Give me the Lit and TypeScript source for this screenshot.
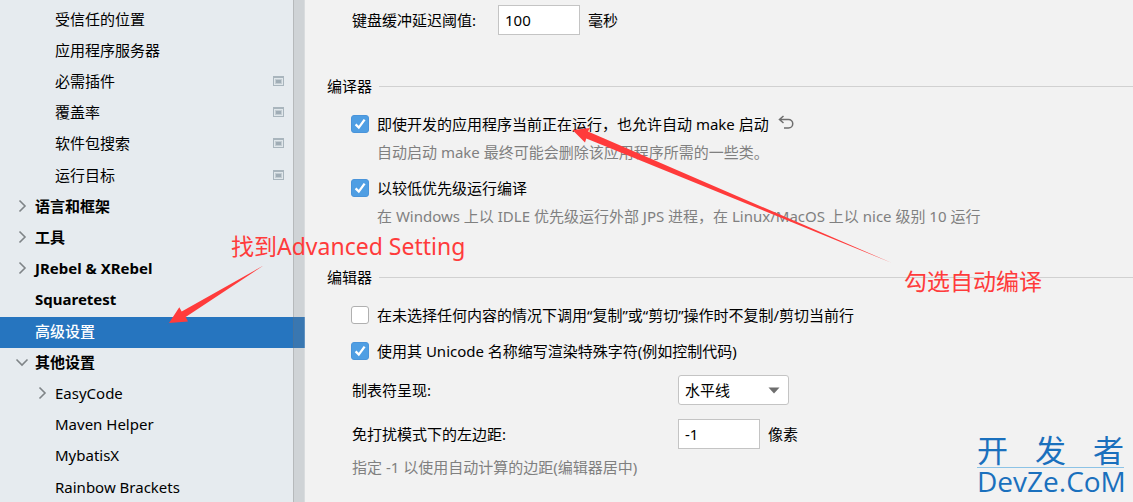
import { LitElement, html, svg, css, nothing } from "lit";
import { customElement, property } from "lit/decorators.js";

type Arrow = "right" | "down";

interface TreeItem {
  label: string;
  level: 1 | 2;
  bold?: boolean;
  arrow?: Arrow;
  project?: boolean;
  selected?: boolean;
}

const ITEMS: TreeItem[] = [
  { label: "受信任的位置", level: 2 },
  { label: "应用程序服务器", level: 2 },
  { label: "必需插件", level: 2, project: true },
  { label: "覆盖率", level: 2, project: true },
  { label: "软件包搜索", level: 2, project: true },
  { label: "运行目标", level: 2, project: true },
  { label: "语言和框架", level: 1, bold: true, arrow: "right" },
  { label: "工具", level: 1, bold: true, arrow: "right" },
  { label: "JRebel & XRebel", level: 1, bold: true, arrow: "right" },
  { label: "Squaretest", level: 1, bold: true },
  { label: "高级设置", level: 1, bold: true, selected: true },
  { label: "其他设置", level: 1, bold: true, arrow: "down" },
  { label: "EasyCode", level: 2, arrow: "right" },
  { label: "Maven Helper", level: 2 },
  { label: "MybatisX", level: 2 },
  { label: "Rainbow Brackets", level: 2 },
];

@customElement("settings-tree")
export class SettingsTree extends LitElement {
  static styles = css`
    :host {
      display: block;
      position: relative;
      overflow: hidden;
      background: #e6ebef;
    }
    .list {
      margin: 0;
      padding: 5px 0 0;
      list-style: none;
    }
    .item {
      display: flex;
      height: 31px;
    }
    .item:nth-child(5n) {
      height: 32px;
    }
    .link {
      flex: 1;
      display: flex;
      align-items: center;
      padding: 0 21px 4px 15px;
      color: #000;
      text-decoration: none;
      white-space: nowrap;
    }
    .level2 {
      padding-left: 35px;
    }
    .bold {
      font-weight: 700;
    }
    .selected {
      background: #2675bf;
      color: #fff;
      font-weight: 500;
    }
    .arrow {
      width: 14px;
      height: 14px;
      margin-right: 6px;
      fill: none;
      stroke: #7f8487;
      stroke-width: 1.6;
    }
    .label {
      flex: 1;
    }
    .project {
      width: 11px;
      height: 10px;
    }
    .scrollbar {
      position: absolute;
      top: 0;
      right: 0;
      bottom: 0;
      width: 12px;
      box-sizing: border-box;
      background: rgba(127, 127, 127, 0.22);
      border-left: 1px solid rgba(110, 110, 110, 0.25);
      border-right: 1px solid rgba(255, 255, 255, 0.2);
    }
  `;

  private arrow(kind?: Arrow) {
    const d = kind === "down" ? "M1.5 4.5 L7 10 L12.5 4.5" : "M4.5 1.5 L10 7 L4.5 12.5";
    return html`<svg class="arrow" viewBox="0 0 14 14" aria-hidden="true">
      ${kind ? svg`<path d=${d} />` : nothing}
    </svg>`;
  }

  private projectIcon() {
    return html`<svg class="project" viewBox="0 0 11 10" aria-hidden="true">
      <path fill="#a9b5bd" d="M0 0h11v10h-11z" />
      <path fill="#e0e7eb" d="M1 2h9v7h-9z" />
      <path fill="#c3ccd2" d="M2 3h7v5h-7z" />
      <path fill="#a0adb6" d="M3 4h5v3h-5z" />
    </svg>`;
  }

  render() {
    return html`
      <ul class="list">
        ${ITEMS.map(
          (i) => html`<li class="item">
            <a
              href="#"
              class="link level${i.level} ${i.bold ? "bold" : ""} ${i.selected ? "selected" : ""}"
              aria-current=${i.selected ? "page" : nothing}
            >
              ${this.arrow(i.arrow)}
              <span class="label">${i.label}</span>
              ${i.project ? this.projectIcon() : nothing}
            </a>
          </li>`
        )}
      </ul>
      <div class="scrollbar"></div>
    `;
  }
}

@customElement("check-option")
export class CheckOption extends LitElement {
  @property() label = "";
  @property() note = "";
  @property({ type: Boolean }) checked = false;
  @property({ type: Boolean }) revertible = false;

  static styles = css`
    :host {
      display: block;
      margin-left: -1px;
    }
    .row {
      display: flex;
      align-items: center;
      height: 20px;
    }
    .box {
      appearance: none;
      flex: none;
      box-sizing: border-box;
      width: 18px;
      height: 18px;
      margin: 0 8px 0 0;
      border: 1px solid #b0b0b0;
      border-radius: 3px;
      background: #fff;
    }
    .box:checked {
      border-color: #4a94da;
      background: #4f9ee3
        url("data:image/svg+xml,%3Csvg xmlns='http://www.w3.org/2000/svg' viewBox='0 0 16 16'%3E%3Cpath d='M3.6 8.4 L6.8 11.6 L12.6 3.6' fill='none' stroke='white' stroke-width='2.3'/%3E%3C/svg%3E")
        center / 16px 16px no-repeat;
    }
    .text {
      white-space: nowrap;
    }
    .revert {
      display: flex;
      margin: 0 0 0 8px;
      padding: 0;
      border: 0;
      background: none;
    }
    .icon {
      width: 18px;
      height: 18px;
      fill: none;
      stroke: #6e6e6e;
      stroke-width: 1.5;
    }
    .note {
      margin: 8px 0 0 26px;
      color: #808080;
      line-height: 20px;
    }
  `;

  render() {
    return html`
      <div class="row">
        <input class="box" id="box" type="checkbox" .checked=${this.checked} />
        <label class="text" for="box">${this.label}</label>
        ${this.revertible
          ? html`<button class="revert" aria-label="还原">
              <svg class="icon" viewBox="0 0 18 18">
                <path d="M6.5 1 L2.5 4.5 L6.5 8 M2.5 4.5 H11.5 A4.2 4.2 0 0 1 11.5 13 H7" />
              </svg>
            </button>`
          : nothing}
      </div>
      ${this.note ? html`<p class="note">${this.note}</p>` : nothing}
    `;
  }
}

@customElement("app-root")
export class AppRoot extends LitElement {
  static styles = css`
    :host {
      display: grid;
      grid-template-columns: 305px 1fr;
      position: relative;
      height: 100vh;
      overflow: hidden;
      background: #f2f2f2;
      color: #000;
      font: 15px/20px "Noto Sans", "Noto Sans CJK SC", sans-serif;
    }
    .panel {
      padding: 5px 0 0 22px;
      min-width: 0;
    }
    .heading {
      display: flex;
      align-items: center;
      gap: 7px;
      margin: 41px 0 18px;
      font-size: 15px;
      font-weight: 400;
    }
    .heading::after {
      content: "";
      flex: 1;
      height: 1px;
      background: #d1d1d1;
    }
    .group {
      display: flex;
      flex-direction: column;
      gap: 16px;
      padding-left: 25px;
    }
    .fields {
      gap: 14px;
      padding-top: 14px;
    }
    .field {
      display: grid;
      grid-template-columns: 326px auto 1fr;
      align-items: center;
    }
    .short {
      grid-template-columns: 146px auto 1fr;
    }
    .number,
    .choice {
      box-sizing: border-box;
      height: 30px;
      margin: 0;
      border: 1px solid #c4c4c4;
      border-radius: 0;
      padding: 0 6px;
      background: #fff;
      color: #000;
      font: inherit;
    }
    .number {
      width: 82px;
    }
    .choice {
      appearance: none;
      width: 111px;
      border-radius: 3px;
      background: #fff
        url("data:image/svg+xml,%3Csvg xmlns='http://www.w3.org/2000/svg' viewBox='0 0 12 7'%3E%3Cpath d='M0.5 0.5h11L6 6.5z' fill='%236e6e6e'/%3E%3C/svg%3E")
        right 8px center / 12px 7px no-repeat;
    }
    .unit {
      padding-left: 8px;
    }
    .note {
      margin: -6px 0 0;
      color: #808080;
    }
    .overlay {
      position: absolute;
      top: 0;
      left: 0;
      width: 1133px;
      height: 502px;
      fill: #ff3b3b;
      pointer-events: none;
    }
    .callout {
      position: absolute;
      color: #ff3b3b;
      font-size: 23px;
      line-height: 32px;
      white-space: nowrap;
    }
    .find {
      left: 231px;
      top: 230px;
    }
    .tick {
      left: 904px;
      top: 265px;
    }
    .brand {
      position: absolute;
      right: 9px;
      bottom: 8px;
      width: 147px;
      color: #1a70bd;
      font-family: "Open Sans", "Noto Sans CJK SC", sans-serif;
    }
    .brand-top {
      display: flex;
      justify-content: space-between;
      font-size: 31px;
      line-height: 32px;
      padding-bottom: 1px;
      border-bottom: 1px solid #8cc3e6;
    }
    .brand-bottom {
      font-size: 28px;
      line-height: 26px;
    }
  `;

  render() {
    return html`
      <settings-tree></settings-tree>
      <main class="panel" lang="zh-CN">
        <div class="group">
          <div class="field short">
            <label for="delay">键盘缓冲延迟阈值:</label>
            <input class="number" id="delay" type="text" value="100" />
            <span class="unit">毫秒</span>
          </div>
        </div>

        <h2 class="heading">编译器</h2>
        <div class="group">
          <check-option
            checked
            revertible
            label="即使开发的应用程序当前正在运行，也允许自动 make 启动"
            note="自动启动 make 最终可能会删除该应用程序所需的一些类。"
          ></check-option>
          <check-option
            checked
            label="以较低优先级运行编译"
            note="在 Windows 上以 IDLE 优先级运行外部 JPS 进程，在 Linux/MacOS 上以 nice 级别 10 运行"
          ></check-option>
        </div>

        <h2 class="heading">编辑器</h2>
        <div class="group">
          <check-option label="在未选择任何内容的情况下调用“复制”或“剪切”操作时不复制/剪切当前行"></check-option>
          <check-option checked label="使用其 Unicode 名称缩写渲染特殊字符(例如控制代码)"></check-option>
        </div>
        <div class="group fields">
          <div class="field">
            <label for="tabs">制表符呈现:</label>
            <select class="choice" id="tabs">
              <option>水平线</option>
            </select>
          </div>
          <div class="field">
            <label for="margin">免打扰模式下的左边距:</label>
            <input class="number" id="margin" type="text" value="-1" />
            <span class="unit">像素</span>
          </div>
          <p class="note">指定 -1 以使用自动计算的边距(编辑器居中)</p>
        </div>
      </main>

      <svg class="overlay" viewBox="0 0 1133 502" aria-hidden="true">
        <path d="M169 323 L179.3 307.3 L181.7 311.5 L263.5 265.5 L185.7 317 L188 321.5 Z" />
        <path d="M572.5 130 L590 128 L588 131.5 L892 263 L586.3 138.5 L585 142.5 Z" />
      </svg>
      <span class="callout find">找到Advanced Setting</span>
      <span class="callout tick">勾选自动编译</span>
      <div class="brand">
        <div class="brand-top"><span>开</span><span>发</span><span>者</span></div>
        <div class="brand-bottom">DevZe.CoM</div>
      </div>
    `;
  }
}
